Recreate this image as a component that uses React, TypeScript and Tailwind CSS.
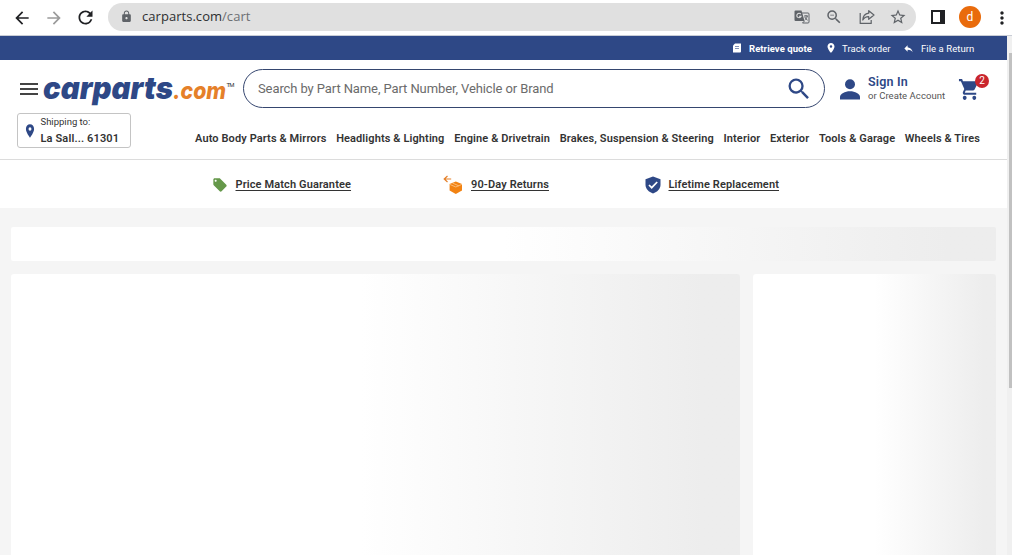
import type { ReactNode } from 'react';
import {
  MdArrowBack,
  MdArrowForward,
  MdLocationOn,
  MdLock,
  MdLocalOffer,
  MdMoreVert,
  MdRefresh,
  MdReply,
  MdSearch,
  MdShoppingCart,
  MdStarBorder,
  MdZoomOut,
} from 'react-icons/md';

const categories = [
  'Auto Body Parts & Mirrors',
  'Headlights & Lighting',
  'Engine & Drivetrain',
  'Brakes, Suspension & Steering',
  'Interior',
  'Exterior',
  'Tools & Garage',
  'Wheels & Tires',
];

function TranslateIcon() {
  return (
    <svg className="h-4 w-4" viewBox="0 0 16 16" fill="none">
      <path d="M6.5 4H14a1 1 0 0 1 1 1v8a1 1 0 0 1-1 1H8.5" stroke="currentColor" />
      <path d="M1.5 1.500h6L10.500 12h-9a1 1 0 0 1-1-1V2.500a1 1 0 0 1 1-1z" fill="currentColor" />
      <path d="M6.800 5.200A2.200 2.200 0 1 0 7.100 7.300H5" stroke="#e0e0e0" strokeWidth="1.100" />
      <path d="M10 7h4M12 6v1M13.300 7c-.3 1.800-1.300 3-2.500 4M10.800 8c.5 1.500 1.500 2.300 2.800 3.200M8.500 14l2-2" stroke="currentColor" />
    </svg>
  );
}

function ShareIcon() {
  return (
    <svg className="h-4 w-4" viewBox="0 0 16 16" fill="none" stroke="currentColor" strokeWidth="1.2" strokeLinejoin="round">
      <path d="M1.2 4v10.4h11V11" />
      <path d="M9.7 1.7 15 6l-5.3 4.3V7.7C7 7.6 5.1 8.8 3.8 11c.2-3.8 2.3-6.3 5.9-6.8z" />
    </svg>
  );
}

function BrowserBar() {
  return (
    <div className="flex h-9 items-center border-b border-[#c9cdd6] bg-white pl-3 text-[#202124]">
      <MdArrowBack className="h-5 w-5" />
      <MdArrowForward className="ml-3 h-5 w-5 text-[#9b9b9b]" />
      <MdRefresh className="ml-[11px] h-[21px] w-[21px]" />
      <div className="mt-[-2px] ml-3 flex h-7 w-[808px] items-center rounded-full bg-[#e0e0e0] pl-3 text-[#5f6368]">
        <MdLock className="h-[13px] w-[13px]" />
        <div className="ml-[9px] w-[645px] pt-px font-['Open_Sans',sans-serif] text-[13px] tracking-[0.04px] text-[#6c6f73]">
          <span className="text-[#2d2f31]">carparts.com</span>/cart
        </div>
        <div className="ml-[7px]">
          <TranslateIcon />
        </div>
        <MdZoomOut className="ml-[15px] h-[18px] w-[18px]" />
        <div className="ml-4">
          <ShareIcon />
        </div>
        <MdStarBorder className="ml-[14px] h-[18px] w-[18px]" />
      </div>
      <div className="mt-[-2px] ml-[15px] h-[14px] w-[14px] border-[2px] border-r-[5px] border-[#202124]" />
      <div className="mt-[-2px] ml-[14px] flex h-[22px] w-[22px] items-center justify-center rounded-full bg-[#e96b0c] text-[12px] text-white">
        d
      </div>
      <MdMoreVert className="ml-[11px] h-5 w-5 shrink-0" />
    </div>
  );
}

function UtilityBar() {
  return (
    <div className="flex h-6 items-center bg-[#2e4886] pl-[732px] text-[9.5px] text-white">
      <svg className="h-[10px] w-[10px]" viewBox="0 0 10 10">
        <path d="M3 .5h6v8a1 1 0 0 1-1 1H1v-7z" fill="#fff" />
        <path d="M3 3.500h4M3 5.500h4" stroke="#2e4886" strokeWidth=".6" />
      </svg>
      <span className="ml-[7px] w-[76px] pt-[2px] font-bold tracking-[0.06px] whitespace-nowrap">Retrieve quote</span>
      <MdLocationOn className="h-3 w-3" />
      <span className="ml-[5px] w-[61px] pt-[2px] tracking-[0.07px] whitespace-nowrap">Track order</span>
      <MdReply className="h-[11px] w-[11px]" />
      <span className="ml-[7px] pt-[2px] tracking-[0.07px]">File a Return</span>
    </div>
  );
}

function Logo() {
  return (
    <svg className="h-10 w-[194px]" viewBox="0 0 194 40">
      <g className="[font-feature-settings:'cv11','ss03']" fontFamily="Inter, sans-serif" fontStyle="italic">
        <text x="1" y="29.500" fontSize="31" fontWeight="900" textLength="130" lengthAdjust="spacingAndGlyphs" fill="#2e4886">
          carparts
        </text>
        <text x="131" y="29.500" fontSize="24" fontWeight="800" textLength="53" lengthAdjust="spacingAndGlyphs" fill="#e58029">
          .com
        </text>
      </g>
      <text x="184.500" y="18" fontSize="6" fontFamily="Roboto, sans-serif" textLength="8" fill="#333">
        TM
      </text>
    </svg>
  );
}

function PersonIcon() {
  return (
    <svg className="h-[21px] w-5" viewBox="0 0 20 21" fill="currentColor">
      <circle cx="10" cy="5.200" r="5" />
      <path d="M0 20.500v-2.500c0-3.300 5-5.800 10-5.800s10 2.500 10 5.800v2.500z" />
    </svg>
  );
}

function Header() {
  return (
    <header className="h-[100px] border-b border-[#dcdcdc] bg-white">
      <div className="flex h-[53px] items-center pt-1">
        <div className="ml-5 flex w-[18px] flex-col gap-[3px] pt-px">
          <div className="h-[2px] bg-[#444]" />
          <div className="h-[2px] bg-[#444]" />
          <div className="h-[2px] bg-[#444]" />
        </div>
        <div className="ml-[4px] w-[201px]">
          <Logo />
        </div>
        <div className="flex h-[39px] w-[582px] items-center justify-between rounded-full border border-[#35466f] pr-[11px] pl-[14px]">
          <span className="text-[13px] tracking-[-0.1px] text-[#6b6b6b]">Search by Part Name, Part Number, Vehicle or Brand</span>
          <MdSearch className="h-7 w-7 text-[#2e4886]" />
        </div>
        <div className="ml-[15px] pt-px text-[#2e4886]">
          <PersonIcon />
        </div>
        <div className="ml-[8px] w-[90px] pb-[2px]">
          <div className="text-[12.5px] leading-[15px] font-semibold tracking-[0.2px] text-[#2e4886]">Sign In</div>
          <div className="text-[9.5px] leading-[13px] tracking-[0.06px] whitespace-nowrap text-[#555]">or Create Account</div>
        </div>
        <div className="relative">
          <MdShoppingCart className="mt-px h-[25px] w-[23px] text-[#2e4886]" preserveAspectRatio="none" />
          <div className="absolute -top-[2px] left-[17px] flex h-[14px] w-[14px] items-center justify-center rounded-full bg-[#c9252d] text-[10px] text-white">
            2
          </div>
        </div>
      </div>
      <div className="flex">
        <div className="ml-[17px] flex h-[35px] w-[114px] items-center rounded-[3px] border border-[#c4c4c4] pl-[5px]">
          <MdLocationOn className="h-4 w-[14px] text-[#2e4886]" preserveAspectRatio="none" />
          <div className="ml-[3.500px] pb-px">
            <div className="text-[9.5px] leading-[16px] text-[#333]">Shipping to:</div>
            <div className="text-[11px] leading-[17px] font-semibold tracking-[0.14px] whitespace-nowrap text-[#333]">La Sall... 61301</div>
          </div>
        </div>
        <nav className="ml-16 flex w-[785px] justify-between pt-[18px] text-[11px] leading-4 font-semibold tracking-[0.11px] whitespace-nowrap text-[#333]">
          {categories.map((name) => (
            <span key={name}>{name}</span>
          ))}
        </nav>
      </div>
    </header>
  );
}

function ReturnBox() {
  return (
    <svg className="h-5 w-5" viewBox="0 0 20 20">
      <path d="M4.500 1 1.200 4l3.300 3M1.200 4h7" fill="none" stroke="#e58029" strokeWidth="1.200" />
      <path d="m12.800 6.500 6.200 2.500v6.600l-6.200 3.400-6.200-3.400V9z" fill="#f28313" />
      <path d="m6.600 9.300 6.200 2.700 6.200-2.700M9.300 7.900l6.400 2.900" fill="none" stroke="#ffd3a1" strokeWidth=".7" />
    </svg>
  );
}

function Shield() {
  return (
    <svg className="h-[18px] w-4" viewBox="0 0 16 18">
      <path d="m8 .5 7.5 2.8v5.5c0 4-3.2 7.4-7.5 8.7C3.7 16.2.5 12.8.5 8.8V3.3z" fill="#2e4886" />
      <path d="m4 9 2.700 2.700 5.500-5.700" fill="none" stroke="#fff" strokeWidth="1.700" />
    </svg>
  );
}

function Perk({ icon, label }: { icon: ReactNode; label: string }) {
  return (
    <div className="flex items-center gap-2">
      {icon}
      <span className="pt-[2px] text-[11px] font-semibold tracking-[0.12px] whitespace-nowrap text-[#333] underline underline-offset-2">
        {label}
      </span>
    </div>
  );
}

function Perks() {
  return (
    <div className="flex h-12 items-center bg-white pt-px pl-[211.5px]">
      <div className="w-[231.5px]">
        <Perk icon={<MdLocalOffer className="h-4 w-4 text-[#65984a]" />} label="Price Match Guarantee" />
      </div>
      <div className="w-[201.5px]">
        <Perk icon={<ReturnBox />} label="90-Day Returns" />
      </div>
      <Perk icon={<Shield />} label="Lifetime Replacement" />
    </div>
  );
}

function CartSkeleton() {
  return (
    <main className="flex flex-1 flex-col gap-[13px] bg-[#f5f5f5] pt-[19px] pr-[11px] pl-[11px]">
      <div className="h-[34px] rounded-[2px] bg-linear-to-r from-white from-50% to-[#ededed] to-95%" />
      <div className="flex flex-1 gap-[13px]">
        <div className="w-[729px] rounded-t-[3px] bg-linear-to-r from-white from-48% to-[#ededed] to-95%" />
        <div className="flex-1 rounded-t-[3px] bg-linear-to-r from-white from-50% to-[#ededed] to-95%" />
      </div>
    </main>
  );
}

export default function App() {
  return (
    <div className="flex h-[555px] w-[1012px] flex-col overflow-hidden bg-white font-['Roboto',sans-serif]">
      <BrowserBar />
      <div className="flex flex-1">
        <div className="flex w-[1007px] flex-col">
          <UtilityBar />
          <Header />
          <Perks />
          <CartSkeleton />
        </div>
        <div className="w-[5px] bg-[#f0f0f0] pt-[17px] pl-[2px]">
          <div className="h-[335px] bg-[#c1c1c1]" />
        </div>
      </div>
    </div>
  );
}
